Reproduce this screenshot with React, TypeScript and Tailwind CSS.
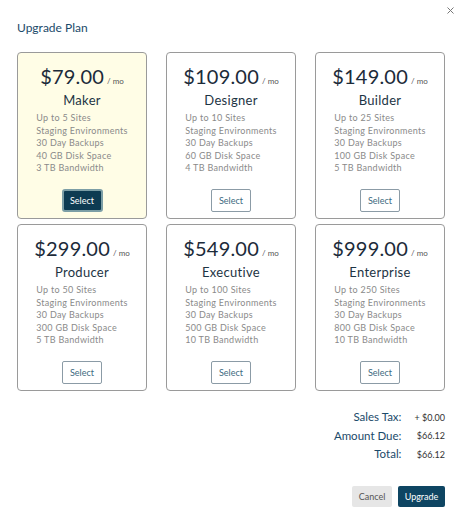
import React from "react";

interface Plan {
  price: string;
  name: string;
  features: string[];
}

const plans: Plan[] = [
  { price: "$79.00", name: "Maker", features: ["Up to 5 Sites", "Staging Environments", "30 Day Backups", "40 GB Disk Space", "3 TB Bandwidth"] },
  { price: "$109.00", name: "Designer", features: ["Up to 10 Sites", "Staging Environments", "30 Day Backups", "60 GB Disk Space", "4 TB Bandwidth"] },
  { price: "$149.00", name: "Builder", features: ["Up to 25 Sites", "Staging Environments", "30 Day Backups", "100 GB Disk Space", "5 TB Bandwidth"] },
  { price: "$299.00", name: "Producer", features: ["Up to 50 Sites", "Staging Environments", "30 Day Backups", "300 GB Disk Space", "5 TB Bandwidth"] },
  { price: "$549.00", name: "Executive", features: ["Up to 100 Sites", "Staging Environments", "30 Day Backups", "500 GB Disk Space", "10 TB Bandwidth"] },
  { price: "$999.00", name: "Enterprise", features: ["Up to 250 Sites", "Staging Environments", "30 Day Backups", "800 GB Disk Space", "10 TB Bandwidth"] },
];

function PlanCard({ plan, selected }: { plan: Plan; selected: boolean }) {
  return (
    <div
      className={`flex h-[167px] flex-col items-center rounded-[4px] border border-[#9a9a9a] pt-[11px] ${
        selected ? "bg-[#fffde6]" : "bg-white"
      }`}
    >
      <div className="flex h-[24px] items-baseline overflow-hidden text-[#1c2b3a]">
        <span className="text-[20px] leading-[24px] tracking-[0.2px]">{plan.price}</span>
        <span className="ml-[3px] text-[8px] leading-none text-[#555]">/ mo</span>
      </div>
      <div className="mt-[3px] h-[18px] text-[13px] leading-[18px] tracking-[0.3px] text-[#1d3444]">{plan.name}</div>
      <ul className="mt-[3px] text-left text-[9px] tracking-[0.3px] text-[#8a8a8a]">
        {plan.features.map((f) => (
          <li key={f} className="h-[12.5px] leading-[12.5px]">
            {f}
          </li>
        ))}
      </ul>
      {selected ? (
        <button className="mt-[14px] h-[23px] w-[41px] rounded-[3px] border-2 border-[#7c9ea6] bg-[#0d3b52] text-[9px] leading-none text-white">
          Select
        </button>
      ) : (
        <button className="mt-[14px] h-[23px] w-[40px] rounded-[2px] border border-[#8b9ba6] bg-white text-[9px] leading-none text-[#3d6a80]">
          Select
        </button>
      )}
    </div>
  );
}

export default function App() {
  return (
    <div className="h-[512px] w-[463px] overflow-hidden bg-white font-['Lato',sans-serif]">
      {/* close */}
      <div className="flex h-[14px] justify-end pt-[6px] pr-[9px]">
        <button className="flex h-[8px] w-[8px] items-center justify-center text-[#777]">
          <svg width="7" height="7" viewBox="0 0 7 7" fill="none" stroke="currentColor" strokeWidth="1">
            <path d="M0.5 0.5 L6.5 6.5 M6.5 0.5 L0.5 6.5" />
          </svg>
        </button>
      </div>

      <div className="px-[17px]">
        <h2 className="mt-[5px] h-[18px] text-[12px] leading-[18px] text-[#1b4a6a]">Upgrade Plan</h2>

        <div className="mt-[15px] grid w-[428px] grid-cols-3 gap-x-[19px] gap-y-[5px]">
          {plans.map((p, i) => (
            <PlanCard key={p.name} plan={p} selected={i === 0} />
          ))}
        </div>

        <div className="mt-[17px] flex justify-end pr-[1px]">
          <div className="grid grid-cols-[auto_auto] items-center gap-x-[13px]">
            <div className="h-[18.5px] text-right text-[11.5px] leading-[18.5px] text-[#1b4a6a]">Sales Tax:</div>
            <div className="text-right text-[9px] leading-none text-[#333]">+ $0.00</div>
            <div className="h-[18.5px] text-right text-[11.5px] leading-[18.5px] text-[#1b4a6a]">Amount Due:</div>
            <div className="text-right text-[9px] leading-none text-[#333]">$66.12</div>
            <div className="h-[18.5px] text-right text-[11.5px] leading-[18.5px] text-[#1b4a6a]">Total:</div>
            <div className="text-right text-[9px] leading-none text-[#333]">$66.12</div>
          </div>
        </div>

        <div className="mt-[22px] flex justify-end gap-[6px] pr-[1px]">
          <button className="h-[21px] w-[40px] rounded-[2px] bg-[#e6e6e6] text-[9px] leading-none text-[#555]">Cancel</button>
          <button className="h-[21px] w-[47px] rounded-[2px] bg-[#0e4562] text-[9px] leading-none text-white">Upgrade</button>
        </div>
      </div>
    </div>
  );
}
